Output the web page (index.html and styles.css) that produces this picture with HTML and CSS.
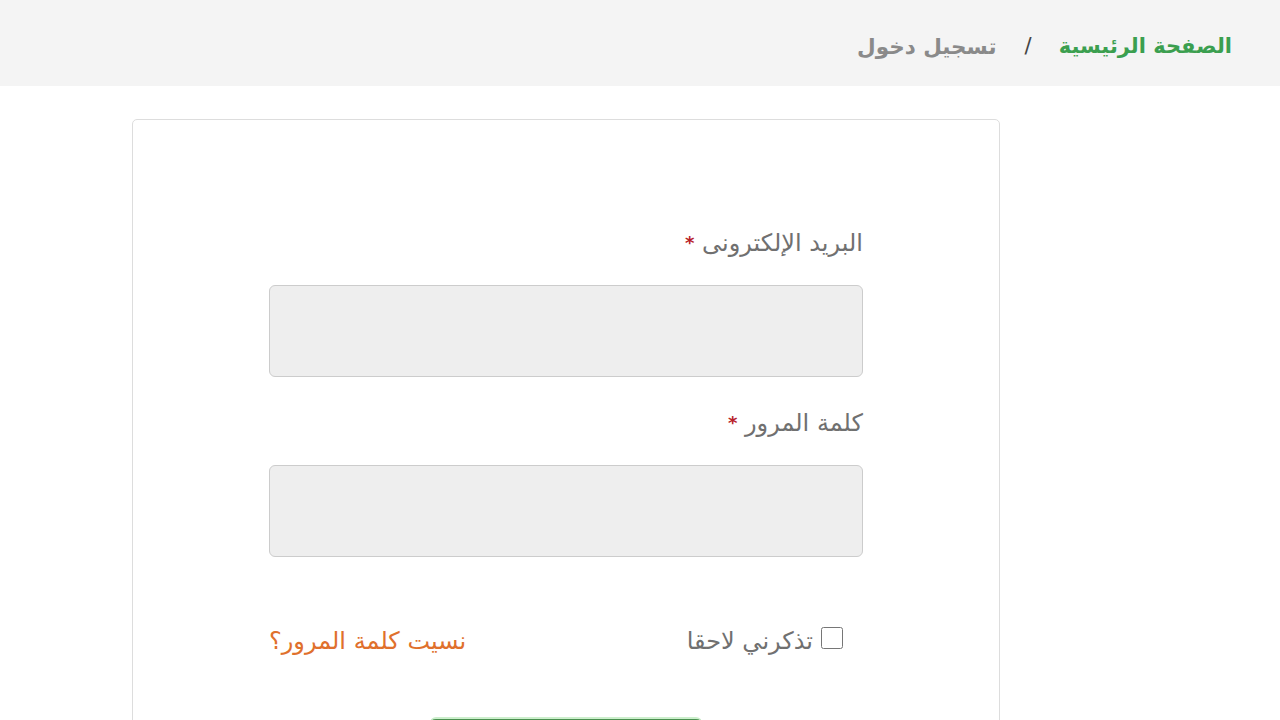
FILE: index.html
```html
<!DOCTYPE html>
<html lang="ar" dir="rtl">
<head>
    <meta charset="UTF-8">
    <meta name="viewport" content="width=device-width, initial-scale=1.0">
    <title>تسجيل دخول</title>
    <link rel="stylesheet" href="styles.css">
</head>
<body>
    <header class="crumbs">
        <a href="#" class="crumb-home">الصفحة الرئيسية</a>
        <span class="crumb-sep">/</span>
        <span class="crumb-current">تسجيل دخول</span>
    </header>

    <div class="page">
        <div class="card">
            <form class="login-form">
                <div class="field">
                    <label>البريد الإلكترونى <span class="req">*</span></label>
                    <input type="email" class="text-input">
                </div>

                <div class="field">
                    <label>كلمة المرور <span class="req">*</span></label>
                    <input type="password" class="text-input">
                </div>

                <div class="options">
                    <label class="remember">
                        <input type="checkbox">
                        <span>تذكرني لاحقا</span>
                    </label>
                    <a href="#" class="forgot">نسيت كلمة المرور؟</a>
                </div>

                <div class="actions">
                    <button type="submit" class="btn">تسجيل دخول</button>
                </div>
            </form>
        </div>
    </div>
</body>
</html>
```

FILE: styles.css
```css
body {
    margin: 0;
    background: #fff;
    font-family: "DejaVu Sans", sans-serif;
    color: #707070;
}
.crumbs {
    height: 86px;
    box-sizing: border-box;
    padding-top: 6px;
    background: #f4f4f4;
    display: flex;
    align-items: center;
    padding-right: 48px;
    font-size: 21px;
    font-weight: bold;
}
.crumb-home {
    color: #3b9f4f;
    text-decoration: none;
}
.crumb-sep {
    color: #444;
    font-weight: normal;
    margin: 0 27px 0 28px;
}
.crumb-current {
    color: #8a8a8a;
    font-size: 21.5px;
}
.page {
    padding-top: 33px;
    padding-right: 280px;
}
.card {
    width: 868px;
    height: 700px;
    border: 1px solid #ddd;
    border-radius: 5px;
    padding-top: 108px;
    box-sizing: border-box;
}
.login-form {
    width: 594px;
    margin: 0 auto;
}
.field {
    margin-bottom: 31px;
}
.field label {
    display: block;
    font-size: 24px;
    line-height: 30px;
    margin-bottom: 27px;
}
.req {
    color: #b8222a;
    font-size: 18px;
    font-weight: bold;
    vertical-align: top;
}
.text-input {
    display: block;
    width: 100%;
    height: 92px;
    box-sizing: border-box;
    background: #eee;
    border: 1px solid #ccc;
    border-radius: 6px;
}
.options {
    display: flex;
    justify-content: space-between;
    align-items: center;
    margin-top: 69px;
    font-size: 24px;
    line-height: 30px;
}
.remember {
    display: flex;
    align-items: center;
    gap: 8px;
    padding-right: 20px;
}
.remember input {
    width: 22px;
    height: 22px;
    margin: 0 0 6px 0;
}
.forgot {
    color: #e0702c;
    text-decoration: none;
}
.actions {
    text-align: center;
    margin-top: 61px;
}
.btn {
    width: 272px;
    height: 56px;
    background: #4a8f50;
    border: none;
    border-top: 2px solid #ccefcc;
    border-radius: 6px;
    color: #fff;
    font-size: 20px;
    font-family: inherit;
}
```
